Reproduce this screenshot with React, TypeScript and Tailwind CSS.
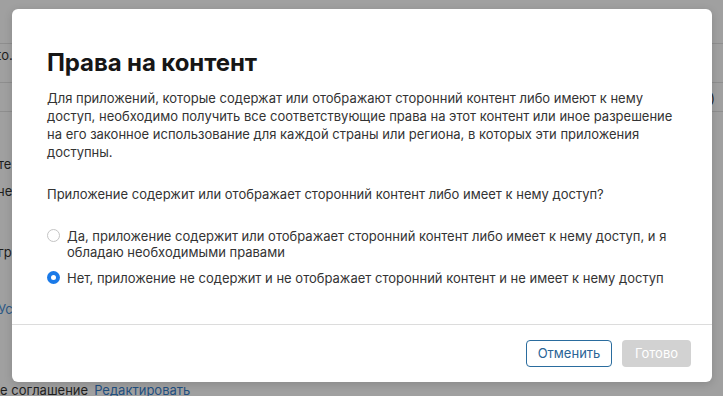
import React from "react";

const font = { fontFamily: "Inter, 'Noto Sans', 'Liberation Sans', sans-serif" };

function Radio({ checked }: { checked: boolean }) {
  return checked ? (
    <span className="mt-[1px] flex h-[13px] w-[13px] shrink-0 items-center justify-center rounded-full bg-[#1a7ae8]">
      <span className="h-[5px] w-[5px] rounded-full bg-white" />
    </span>
  ) : (
    <span className="mt-[1px] h-[13px] w-[13px] shrink-0 rounded-full border border-[#c4c4c4] bg-white" />
  );
}

export default function App() {
  return (
    <div className="relative h-[396px] w-[723px] overflow-hidden bg-[#a0a0a0] text-[13px]" style={font}>
      {/* background page (dimmed) */}
      <div className="flex h-full flex-col text-[#1e1e1e]">
        <div className="h-[44px] border-b border-[#8e8e8e]" />
        <div className="flex h-[28px] items-start">
          <span className="-ml-[3px] pt-[2px] leading-[18px]">to.</span>
        </div>
        <div className="h-[11px] border-b border-[#8e8e8e]" />
        <div className="flex h-[28px] justify-end pr-[8px] pt-[6px] text-[#222]">)</div>
        <div className="h-[44px] border-t border-[#8e8e8e]" />
        <div className="-ml-[2px] leading-[18px]">те</div>
        <div className="mt-[9px] -ml-[3px] leading-[18px]">не</div>
        <div className="mt-[43px] -ml-[2px] leading-[18px]">гр</div>
        <div className="mt-[39px] -ml-[2px] leading-[18px] text-[#2d5a86]">Ус</div>
        <div className="flex-1" />
        <div className="mb-[-3px] flex gap-[6px] leading-[18px]">
          <span>е соглашение</span>
          <span className="text-[#1f4f80]">Редактировать</span>
        </div>
      </div>

      {/* modal */}
      <div className="absolute left-[12px] top-[9px] flex h-[373px] w-[700px] flex-col rounded-[6px] bg-white shadow-[0_2px_8px_rgba(0,0,0,0.15)]">
        <div className="flex-1 px-[35px] pt-[39px]">
          <h1 className="text-[24px] font-bold leading-[30px] tracking-[-0.1px] text-[#161616]">Права на контент</h1>
          <p className="mt-[11px] text-[13px] leading-[18px] text-[#333]">
            Для приложений, которые содержат или отображают сторонний контент либо имеют к нему доступ, необходимо получить все соответствующие права на этот контент или иное разрешение на его законное использование для каждой страны или региона, в которых эти приложения доступны.
          </p>
          <p className="mt-[24px] text-[13px] leading-[18px] text-[#333]">
            Приложение содержит или отображает сторонний контент либо имеет к нему доступ?
          </p>
          <div className="mt-[25px] flex flex-col gap-[10px] text-[#333]">
            <label className="flex items-start gap-[7px] leading-[16px]">
              <Radio checked={false} />
              <span>Да, приложение содержит или отображает сторонний контент либо имеет к нему доступ, и я обладаю необходимыми правами</span>
            </label>
            <label className="flex items-start gap-[7px] leading-[16px]">
              <Radio checked={true} />
              <span>Нет, приложение не содержит и не отображает сторонний контент и не имеет к нему доступ</span>
            </label>
          </div>
        </div>
        <div className="flex justify-end gap-[10px] border-t border-[#dcdcdc] px-[21px] pb-[15px] pt-[15px]">
          <button className="h-[27px] w-[86px] rounded-[4px] border border-[#2a6c9e] bg-white text-[13px] text-[#2a6496]">Отменить</button>
          <button className="h-[27px] w-[69px] rounded-[4px] bg-[#d2d2d2] text-[13px] text-white">Готово</button>
        </div>
      </div>
    </div>
  );
}
